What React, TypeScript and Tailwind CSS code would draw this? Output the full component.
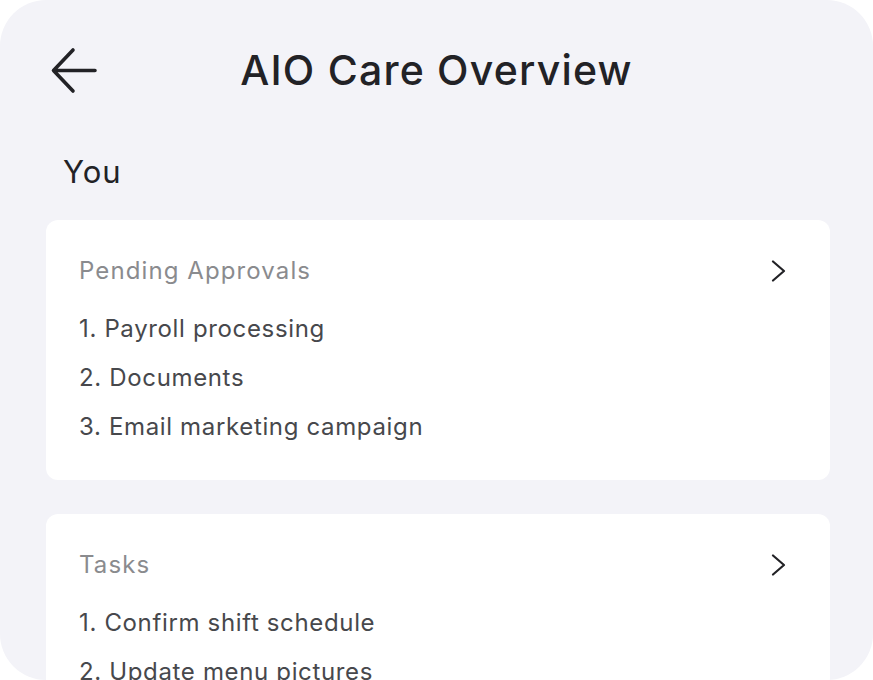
const sections = [
  {
    title: "Pending Approvals",
    items: ["Payroll processing", "Documents", "Email marketing campaign"],
  },
  {
    title: "Tasks",
    items: ["Confirm shift schedule", "Update menu pictures"],
  },
];

function BackArrow() {
  return (
    <svg width="48" height="48" viewBox="0 0 48 48" fill="none" className="text-[#222226]">
      <path
        d="M45 23.5H3.5M23 3L3.5 23.5L23 44"
        stroke="currentColor"
        strokeWidth="3.6"
        strokeLinecap="round"
        strokeLinejoin="round"
      />
    </svg>
  );
}

function Chevron() {
  return (
    <svg width="16" height="22" viewBox="0 0 16 22" fill="none" className="text-[#222226]">
      <path d="M2 1.5L13 11L2 20.5" stroke="currentColor" strokeWidth="2.2" strokeLinecap="round" strokeLinejoin="round" />
    </svg>
  );
}

export default function App() {
  return (
    <div className="h-[680px] w-full bg-white" style={{ fontFamily: "Inter, 'Noto Sans', sans-serif" }}>
      <div className="h-full overflow-hidden rounded-[46px] bg-[#f3f3f8]">
        {/* Header */}
        <div className="relative flex h-[44px] items-center justify-center mt-[49px]">
          <button className="absolute left-[50px] top-[-2px]">
            <BackArrow />
          </button>
          <h1 className="text-[41px] font-medium tracking-[1.2px] text-[#222226]">AIO Care Overview</h1>
        </div>

        <p className="mt-[61px] ml-[63px] text-[31px] leading-[36px] tracking-[1px] text-[#222226]">You</p>

        <div className="mt-[30px] flex flex-col gap-[34px] ml-[46px] mr-[43px]">
          {sections.map((s) => (
            <div key={s.title} className="rounded-[12px] bg-white pl-[33px] pr-[43px] pt-[35px] pb-[29px]">
              <div className="flex items-center justify-between h-[32px]">
                <span className="text-[24px] tracking-[1.1px] text-[#8a8b8e]">{s.title}</span>
                <Chevron />
              </div>
              <ul className="mt-[17px] flex flex-col">
                {s.items.map((item, i) => (
                  <li key={item} className="h-[49px] flex items-center text-[24px] tracking-[0.65px] text-[#47484c]">
                    {i + 1}. {item}
                  </li>
                ))}
              </ul>
            </div>
          ))}
        </div>
      </div>
    </div>
  );
}
